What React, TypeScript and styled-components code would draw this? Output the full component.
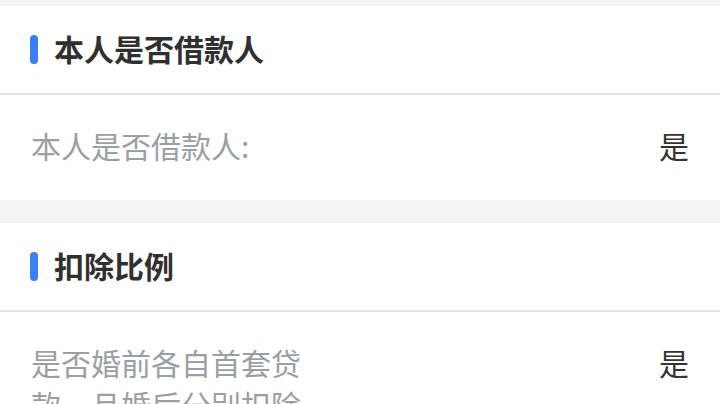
import React from "react";
import styled, { createGlobalStyle } from "styled-components";

const Global = createGlobalStyle`
  html, body { margin: 0; padding: 0; }
  body {
    background: #f2f4f6;
    font-family: "Noto Sans CJK SC", "Noto Sans", sans-serif;
  }
`;

const Page = styled.div`
  display: flex;
  flex-direction: column;
  gap: 23px;
  padding-top: 6px;
`;

const Section = styled.section`
  background: #ffffff;
  display: flex;
  flex-direction: column;
`;

const Header = styled.div`
  height: 87px;
  display: flex;
  align-items: center;
  gap: 16px;
  padding-left: 30px;
  border-bottom: 2px solid #dfe3e2;
`;

const Accent = styled.span`
  width: 8px;
  height: 29px;
  border-radius: 4px;
  background: #3a7ff5;
`;

const Title = styled.h2`
  margin: 0 0 4px;
  font-size: 30px;
  line-height: 42px;
  font-weight: 700;
  color: #303030;
`;

const Row = styled.div`
  display: flex;
  justify-content: space-between;
  align-items: flex-start;
  padding: 29px 31px 34px;
`;

const Label = styled.div`
  max-width: 282px;
  font-size: 30px;
  line-height: 42px;
  color: #9a9fa4;
`;

const Value = styled.div`
  font-size: 30px;
  line-height: 42px;
  color: #333333;
`;

const sections = [
  { title: "本人是否借款人", label: "本人是否借款人:", value: "是" },
  { title: "扣除比例", label: "是否婚前各自首套贷款，且婚后分别扣除", value: "是" },
];

export default function App() {
  return (
    <>
      <Global />
      <Page>
        {sections.map((s) => (
          <Section key={s.title}>
            <Header>
              <Accent />
              <Title>{s.title}</Title>
            </Header>
            <Row>
              <Label>{s.label}</Label>
              <Value>{s.value}</Value>
            </Row>
          </Section>
        ))}
      </Page>
    </>
  );
}
